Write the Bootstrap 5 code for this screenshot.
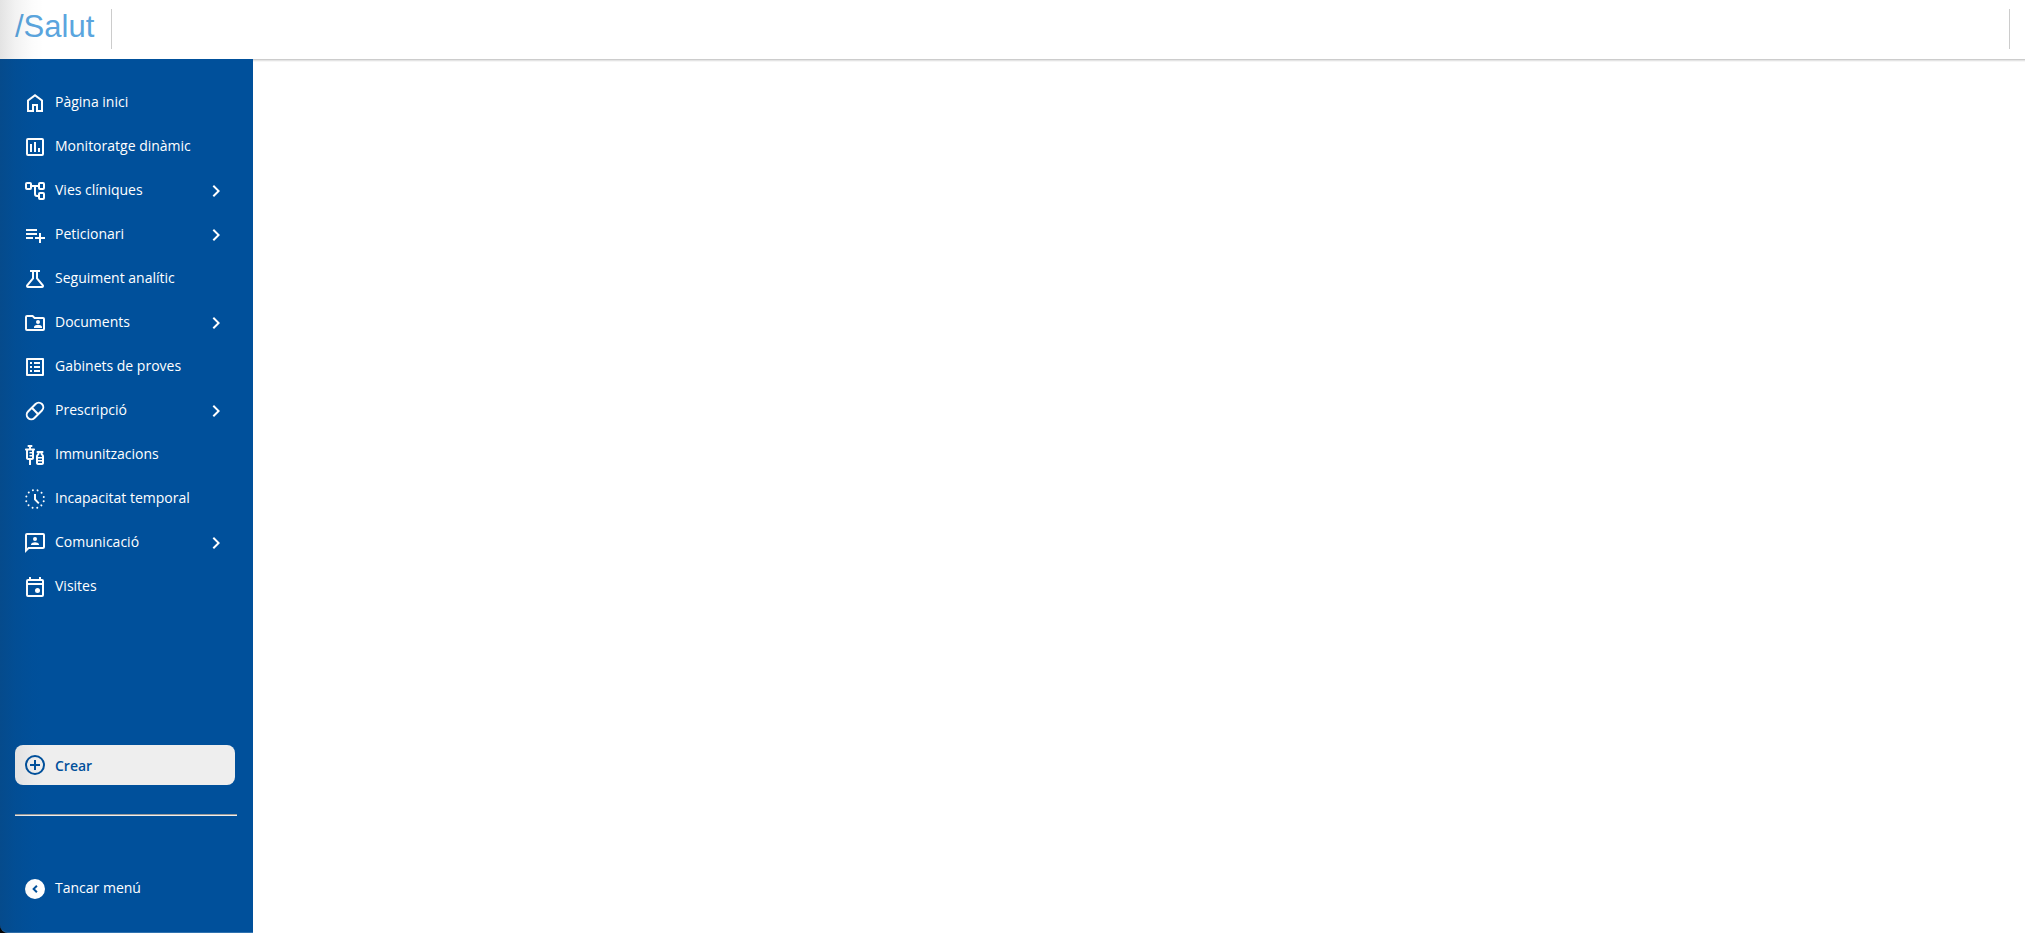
<!DOCTYPE html>
<html lang="ca">
<head>
<meta charset="utf-8">
<meta name="viewport" content="width=device-width, initial-scale=1">
<title>Salut</title>
<link href="https://cdn.jsdelivr.net/npm/bootstrap@5.3.0/dist/css/bootstrap.min.css" rel="stylesheet">
<style>
  body { font-family: "Open Sans", sans-serif; font-size: 14px; line-height: 20px; }
  /* soft shade along the left edge of the window */
  .edge-shade { left: 0; top: 0; width: 44px; z-index: 5; background: linear-gradient(90deg, rgba(40,40,40,.13), rgba(40,40,40,.06) 35%, rgba(40,40,40,.01) 75%, transparent); }
  .topbar { height: 59px; padding: 9px 15px 10px; }
  .brand { color: #5aa5de; font-family: "Liberation Sans", Arial, sans-serif; font-size: 31px; line-height: 36px; width: 96px; }
  .brand:hover { color: #5aa5de; }
  .rule { width: 1px; height: 40px; background: #ccc; }
  .sidebar { width: 253px; background: #00509b; padding: 22px 16px 21px 15px; border-bottom: 1px solid #2f72b0; border-bottom-left-radius: 8px; }
  .corner { background: #000; }
  .content { border-top: 1px solid #ccc; box-shadow: inset 0 1px 0 #e4e4e4, inset 0 2px 0 #f6f6f6; }
  .item { height: 44px; padding: 0 9px 0 8px; gap: 8px; color: #fff; font-weight: 500; text-decoration: none; background: none; border: 0; text-align: left; }
  .item:hover { color: #fff; }
  .item span { margin-bottom: 2px; }
  .item svg, .create svg { width: 24px; height: 24px; flex: none; fill: currentColor; }
  .create { width: 220px; height: 40px; padding: 0 8px; gap: 8px; border: 0; border-radius: 8px; background: #eee; color: #00509b; font-weight: 600; }
  .create span { margin-top: 2px; }
  .divide { margin: 29px 0 51px; border: 0; border-top: 1px solid #9a9a9a; border-bottom: 1px solid #eee; opacity: 1; }
</style>
</head>
<body class="bg-white">
<div class="position-relative d-flex flex-column min-vh-100">
  <div class="edge-shade position-absolute h-100 pe-none"></div>
  <header class="topbar d-flex justify-content-between bg-white">
    <div class="d-flex">
      <a class="brand text-decoration-none" href="#">/Salut</a>
      <div class="rule"></div>
    </div>
    <div class="rule"></div>
  </header>
  <div class="d-flex flex-grow-1">
    <div class="corner d-flex">
    <nav class="sidebar d-flex flex-column" aria-label="Menú principal">
      <a class="item d-flex align-items-center" href="#"><svg viewBox="0 0 24 24"><path d="M6 19h3v-6h6v6h3v-9l-6-4.500L6 10v9Zm-2 2V9l8-6 8 6v12h-7v-6h-2v6H4Z"/></svg><span>Pàgina inici</span></a>
      <a class="item d-flex align-items-center" href="#"><svg viewBox="0 0 24 24"><path d="M7 9h2v8H7zm4-2h2v10h-2zm4 6h2v4h-2z"/><path fill-rule="evenodd" d="M5 3h14a2 2 0 0 1 2 2v14a2 2 0 0 1-2 2H5a2 2 0 0 1-2-2V5a2 2 0 0 1 2-2Zm0 2v14h14V5Z"/></svg><span>Monitoratge dinàmic</span></a>
      <a class="item d-flex align-items-center" href="#"><svg viewBox="0 0 24 24"><g fill="none" stroke="currentColor" stroke-width="2"><rect x="3" y="4" width="5" height="6" rx="1"/><rect x="16" y="4" width="5" height="6" rx="1"/><rect x="16" y="14" width="5" height="6" rx="1"/><path d="M8 7h8M12 7v8a2 2 0 0 0 2 2h2"/></g></svg><span class="flex-grow-1">Vies clíniques</span><svg viewBox="0 0 24 24"><path d="M10 6 8.600 7.400l4.600 4.600-4.600 4.600L10 18l6-6z"/></svg></a>
      <a class="item d-flex align-items-center" href="#"><svg viewBox="0 0 24 24"><path d="M14 10H3v2h11v-2Zm0-4H3v2h11V6Zm4 8v-4h-2v4h-4v2h4v4h2v-4h4v-2h-4ZM3 16h7v-2H3v2Z"/></svg><span class="flex-grow-1">Peticionari</span><svg viewBox="0 0 24 24"><path d="M10 6 8.600 7.400l4.600 4.600-4.600 4.600L10 18l6-6z"/></svg></a>
      <a class="item d-flex align-items-center" href="#"><svg viewBox="0 0 24 24"><path d="M5 21q-1.300 0-1.800-1.100t.2-2.100L9 11V5H7V3h10v2h-2v6l5.600 6.800q.8 1 .2 2.100T19 21H5Zm0-2h14l-6-7.300V5h-2v6.700L5 19Z"/></svg><span>Seguiment analític</span></a>
      <a class="item d-flex align-items-center" href="#"><svg viewBox="0 0 24 24"><path fill-rule="evenodd" d="M4 4h6l2 2h8a2 2 0 0 1 2 2v10a2 2 0 0 1-2 2H4a2 2 0 0 1-2-2V6a2 2 0 0 1 2-2Zm0 2v12h16V8h-8.800l-2-2Z"/><circle cx="15" cy="11" r="2"/><path d="M11 17v-1c0-1.400 2.700-2.200 4-2.200s4 .8 4 2.200v1z"/></svg><span class="flex-grow-1">Documents</span><svg viewBox="0 0 24 24"><path d="M10 6 8.600 7.400l4.600 4.600-4.600 4.600L10 18l6-6z"/></svg></a>
      <a class="item d-flex align-items-center" href="#"><svg viewBox="0 0 24 24"><path d="M11 7h6v2h-6zm0 4h6v2h-6zm0 4h6v2h-6zM7 7h2v2H7zm0 4h2v2H7zm0 4h2v2H7z"/><path fill-rule="evenodd" d="M4 3h16a1 1 0 0 1 1 1v16a1 1 0 0 1-1 1H4a1 1 0 0 1-1-1V4a1 1 0 0 1 1-1Zm1 2v14h14V5Z"/></svg><span>Gabinets de proves</span></a>
      <a class="item d-flex align-items-center" href="#"><svg viewBox="0 0 24 24"><g fill="none" stroke="currentColor" stroke-width="2" transform="rotate(-45 12 12)"><rect x="2.200" y="7.500" width="19.600" height="9" rx="4.500"/><path d="M12 7.500v9"/></g></svg><span class="flex-grow-1">Prescripció</span><svg viewBox="0 0 24 24"><path d="M10 6 8.600 7.400l4.600 4.600-4.600 4.600L10 18l6-6z"/></svg></a>
      <a class="item d-flex align-items-center" href="#"><svg viewBox="0 0 24 24"><path d="M11 5.500H8V4h.5c.55 0 1-.45 1-1s-.45-1-1-1h-3c-.55 0-1 .45-1 1s.45 1 1 1H6v1.500H3c-.55 0-1 .45-1 1s.45 1 1 1V15c0 1.100.9 2 2 2h1v5h2v-5h1c1.100 0 2-.9 2-2V7.500c.55 0 1-.45 1-1s-.45-1-1-1zM9 9H6.500v1.500H9V12H6.500v1.500H9V15H5V7.500h4V9zm10.500 1.500V10c.55 0 1-.45 1-1s-.45-1-1-1h-5c-.55 0-1 .45-1 1s.45 1 1 1v.5c0 .5-1.500 1.160-1.500 3V20c0 1.100.9 2 2 2h4c1.100 0 2-.9 2-2v-6.500c0-1.840-1.500-2.500-1.500-3zm-3 0V10h1v.5c0 1.600 1.500 2 1.500 3v.5h-4v-.5c0-1 1.500-1.400 1.500-3zm2.500 5V17h-4v-1.500h4zM15 20v-1.500h4V20h-4z"/></svg><span>Immunitzacions</span></a>
      <a class="item d-flex align-items-center" href="#"><svg viewBox="0 0 24 24"><path d="M11 7h2v5l3.500 3.700-1.400 1.300L11 12.800Z"/><circle cx="12" cy="12" r="9" fill="none" stroke="currentColor" stroke-width="2" stroke-linecap="round" stroke-dasharray="0 4.712" transform="rotate(15 12 12)"/></svg><span>Incapacitat temporal</span></a>
      <a class="item d-flex align-items-center" href="#"><svg viewBox="0 0 24 24"><path fill-rule="evenodd" d="M4 2h16a2 2 0 0 1 2 2v12a2 2 0 0 1-2 2H6l-4 4V4a2 2 0 0 1 2-2Zm0 2v13.200L5.200 16H20V4Z"/><circle cx="12" cy="8" r="2"/><path d="M8 14v-.6C8 12 10.700 11.200 12 11.200s4 .8 4 2.200v.6z"/></svg><span class="flex-grow-1">Comunicació</span><svg viewBox="0 0 24 24"><path d="M10 6 8.600 7.400l4.600 4.600-4.600 4.600L10 18l6-6z"/></svg></a>
      <a class="item d-flex align-items-center" href="#"><svg viewBox="0 0 24 24"><path fill-rule="evenodd" d="M6 2h2v2h8V2h2v2h1a2 2 0 0 1 2 2v14a2 2 0 0 1-2 2H5a2 2 0 0 1-2-2V6a2 2 0 0 1 2-2h1Zm-1 8v10h14V10Zm0-4v2h14V6Z"/><circle cx="14.500" cy="15.500" r="2.500"/></svg><span>Visites</span></a>
      <div class="mt-auto">
        <button type="button" class="create d-flex align-items-center"><svg viewBox="0 0 24 24"><path d="M11 7h2v4h4v2h-4v4h-2v-4H7v-2h4z"/><circle cx="12" cy="12" r="9" fill="none" stroke="currentColor" stroke-width="2"/></svg><span>Crear</span></button>
        <hr class="divide">
        <button type="button" class="item d-flex align-items-center w-100"><svg viewBox="0 0 24 24"><path fill-rule="evenodd" d="M12 2a10 10 0 1 1 0 20 10 10 0 0 1 0-20Zm1.200 6L9.200 12l4 4 1.400-1.400L12 12l2.600-2.600Z"/></svg><span>Tancar menú</span></button>
      </div>
    </nav>
    </div>
    <main class="content flex-grow-1 bg-white"></main>
  </div>
</div>
<script src="https://cdn.jsdelivr.net/npm/bootstrap@5.3.0/dist/js/bootstrap.bundle.min.js"></script>
</body>
</html>
